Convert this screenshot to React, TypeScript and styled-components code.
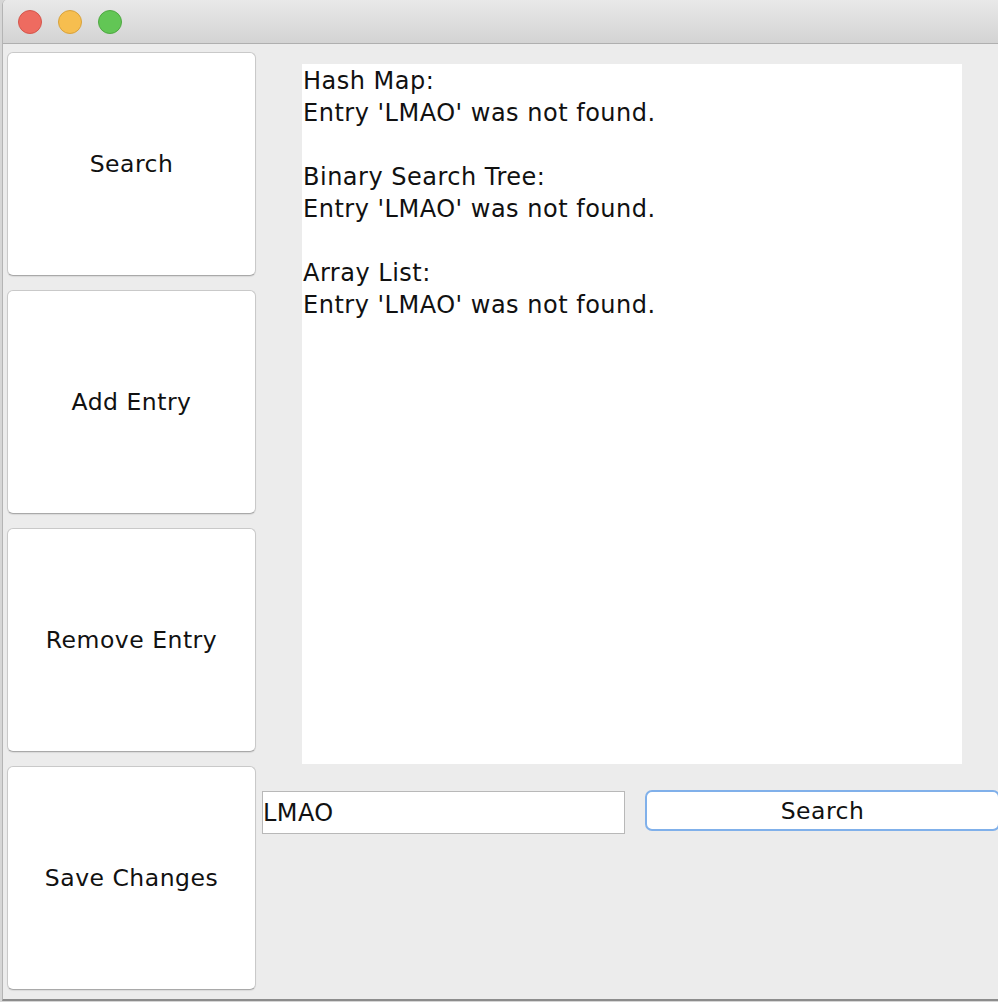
import React from 'react';
import styled, { createGlobalStyle } from 'styled-components';

const GlobalStyle = createGlobalStyle`
  html, body {
    margin: 0;
    padding: 0;
    background: #d6d6d6;
    overflow: hidden;
  }
  body {
    font-family: "DejaVu Sans", "Liberation Sans", sans-serif;
  }
`;

const Window = styled.div`
  margin-left: 2px;
  width: 995px;
  height: 999px;
  display: flex;
  flex-direction: column;
  overflow: hidden;
  background: #ececec;
  border-left: 1px solid #b4b4b4;
  border-bottom: 2px solid #8c8c8c;
  border-top-left-radius: 5px;
`;

const TitleBar = styled.div`
  height: 43px;
  flex-shrink: 0;
  display: flex;
  align-items: center;
  gap: 16px;
  padding-left: 15px;
  background: linear-gradient(#e9e9e9, #d3d3d3);
  border-bottom: 1px solid #afafaf;
`;

const Light = styled.span<{ $fill: string; $edge: string }>`
  width: 24px;
  height: 24px;
  border-radius: 50%;
  box-sizing: border-box;
  background: ${({ $fill }) => $fill};
  border: 1px solid ${({ $edge }) => $edge};
`;

const Body = styled.div`
  display: flex;
  padding: 8px 0 0 4px;
`;

const SideColumn = styled.div`
  display: flex;
  flex-direction: column;
  gap: 14px;
  width: 249px;
  flex-shrink: 0;
`;

const SideButton = styled.button`
  height: 224px;
  box-sizing: border-box;
  background: #fff;
  border: 1px solid #c9c9c9;
  border-bottom-color: #a9a9a9;
  border-radius: 6px;
  box-shadow: 0 1px 1px rgba(0, 0, 0, 0.08);
  font-family: "DejaVu Sans", sans-serif;
  font-size: 23.5px;
  letter-spacing: 0.5px;
  color: #111;
  padding: 0;
`;

const MainColumn = styled.div`
  display: flex;
  flex-direction: column;
  margin-left: 6px;
`;

const Output = styled.div`
  margin: 12px 0 0 40px;
  width: 660px;
  height: 700px;
  background: #fff;
  font-size: 24px;
  line-height: 32px;
  letter-spacing: 0.5px;
  color: #111;
  white-space: pre;
  padding: 1px 0 0 1px;
  box-sizing: border-box;
`;

const SearchRow = styled.div`
  display: flex;
  align-items: flex-start;
  gap: 20px;
  margin-top: 26px;
`;

const QueryField = styled.div`
  width: 363px;
  height: 43px;
  margin-top: 1px;
  box-sizing: border-box;
  background: #fff;
  border: 1px solid #b8b8b8;
  display: flex;
  align-items: center;
  font-size: 24px;
  letter-spacing: 0.4px;
  color: #111;
`;

const SearchButton = styled.button`
  width: 355px;
  height: 41px;
  flex-shrink: 0;
  box-sizing: border-box;
  background: #fff;
  border: 2px solid #80b0ea;
  border-radius: 7px;
  font-family: "DejaVu Sans", sans-serif;
  font-size: 23.5px;
  letter-spacing: 0.5px;
  color: #111;
  padding: 0;
`;

const results = [
  'Hash Map:',
  "Entry 'LMAO' was not found.",
  '',
  'Binary Search Tree:',
  "Entry 'LMAO' was not found.",
  '',
  'Array List:',
  "Entry 'LMAO' was not found.",
].join('\n');

export default function App() {
  return (
    <>
      <GlobalStyle />
      <Window>
        <TitleBar>
          <Light $fill="#ee6b60" $edge="#d4564c" />
          <Light $fill="#f6be4f" $edge="#d8a23c" />
          <Light $fill="#62c655" $edge="#4fa842" />
        </TitleBar>
        <Body>
          <SideColumn>
            <SideButton>Search</SideButton>
            <SideButton>Add Entry</SideButton>
            <SideButton>Remove Entry</SideButton>
            <SideButton>Save Changes</SideButton>
          </SideColumn>
          <MainColumn>
            <Output>{results}</Output>
            <SearchRow>
              <QueryField>LMAO</QueryField>
              <SearchButton>Search</SearchButton>
            </SearchRow>
          </MainColumn>
        </Body>
      </Window>
    </>
  );
}
